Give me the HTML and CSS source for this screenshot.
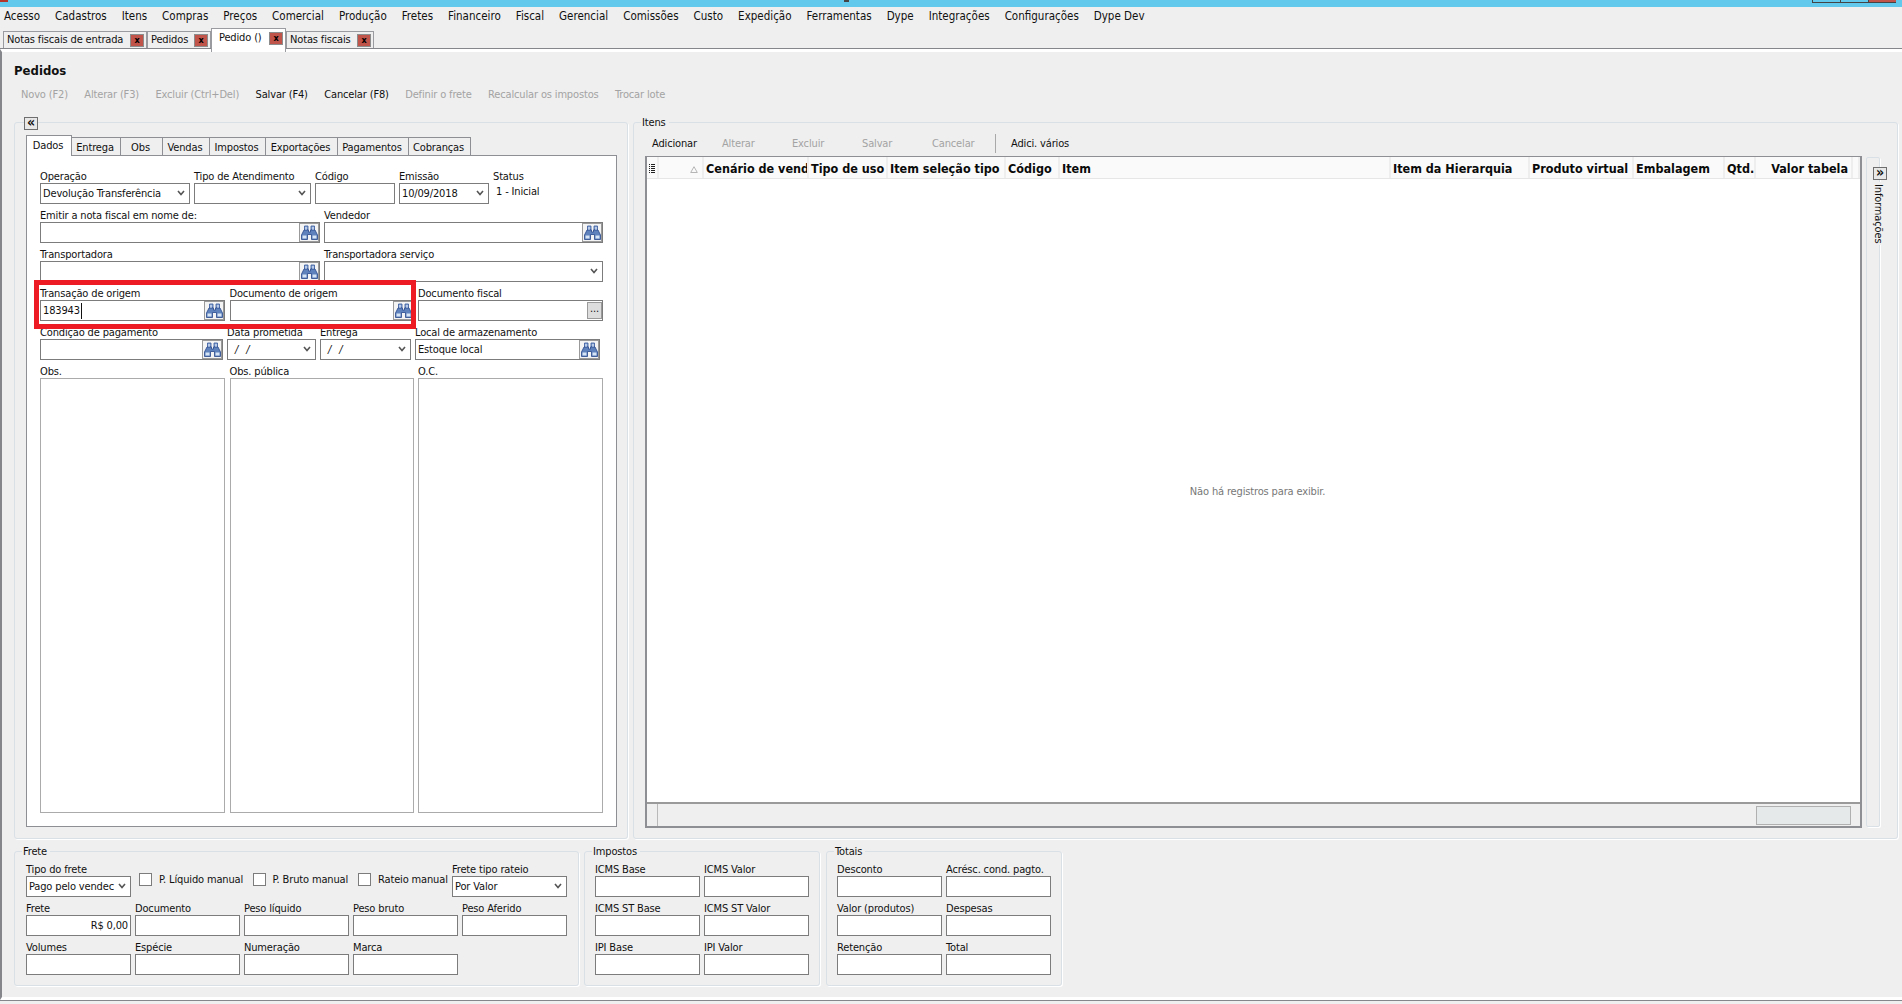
FILE: index.html
```html
<!DOCTYPE html>
<html lang="pt-BR">
<head>
  <meta charset="UTF-8">
  <title>Pedidos</title>
  <link rel="stylesheet" href="styles.css">
</head>
<body>
  <svg class="defs" width="0" height="0">
    <symbol id="binoc" viewBox="0 0 17 15">
      <path d="M3.500 1h3.500v4H3.500zM10 1h3.500v4H10z" fill="#8aa8d6" stroke="#35569a" stroke-width=".8"/>
      <path d="M3 5h4.500v2h2V5H14l2.500 5v4.500h-6v-5h-4v5h-6V10z" fill="#5f82bd" stroke="#27478a" stroke-width=".8"/>
      <path d="M1.500 10.500h4v3h-4zM11.500 10.500h4v3h-4z" fill="#d6e4f6"/>
      <path d="M4.500 2h1v3h-1zM11.500 2h1v3h-1z" fill="#e3edf9"/>
    </symbol>
    <symbol id="chev" viewBox="0 0 8 6">
      <path d="M1 1l3 3.500L7 1" fill="none" stroke="#555" stroke-width="1.600"/>
    </symbol>
  </svg>

  <div class="titlebar">
    <span class="app-icon"></span>
    <span class="title-mark"></span>
    <div class="win-btns">
      <span class="win-btn"></span>
      <span class="win-btn"></span>
      <span class="win-btn close"></span>
    </div>
  </div>

  <nav class="menu">
    <span>Acesso</span><span>Cadastros</span><span>Itens</span><span>Compras</span><span>Preços</span>
    <span>Comercial</span><span>Produção</span><span>Fretes</span><span>Financeiro</span><span>Fiscal</span>
    <span>Gerencial</span><span>Comissões</span><span>Custo</span><span>Expedição</span><span>Ferramentas</span>
    <span>Dype</span><span>Integrações</span><span>Configurações</span><span>Dype Dev</span>
  </nav>

  <div class="doc-tabs">
    <div class="doc-tab">Notas fiscais de entrada <b class="x">x</b></div>
    <div class="doc-tab">Pedidos <b class="x">x</b></div>
    <div class="doc-tab active">Pedido () <b class="x">x</b></div>
    <div class="doc-tab">Notas fiscais <b class="x">x</b></div>
  </div>

  <main class="page">
    <h1>Pedidos</h1>
    <div class="toolbar">
      <span class="off">Novo (F2)</span>
      <span class="off">Alterar (F3)</span>
      <span class="off">Excluir (Ctrl+Del)</span>
      <span>Salvar (F4)</span>
      <span>Cancelar (F8)</span>
      <span class="off">Definir o frete</span>
      <span class="off">Recalcular os impostos</span>
      <span class="off">Trocar lote</span>
    </div>

    <div class="work">
      <section class="group left-group">
        <span class="mini-btn collapse">«</span>
        <div class="tabs">
          <span class="tab active">Dados</span>
          <span class="tab">Entrega</span>
          <span class="tab">Obs</span>
          <span class="tab">Vendas</span>
          <span class="tab">Impostos</span>
          <span class="tab">Exportações</span>
          <span class="tab">Pagamentos</span>
          <span class="tab">Cobranças</span>
        </div>
        <div class="panel">
          <div class="row row-1">
            <div><label>Operação</label><div class="field select">Devolução Transferência<svg class="chev"><use href="#chev"/></svg></div></div>
            <div><label>Tipo de Atendimento</label><div class="field select"><svg class="chev"><use href="#chev"/></svg></div></div>
            <div><label>Código</label><div class="field"></div></div>
            <div><label>Emissão</label><div class="field select">10/09/2018<svg class="chev"><use href="#chev"/></svg></div></div>
            <div><label>Status</label><div class="status">1 - Inicial</div></div>
          </div>
          <div class="row row-2">
            <div><label>Emitir a nota fiscal em nome de:</label><div class="field"><span class="look"><svg><use href="#binoc"/></svg></span></div></div>
            <div><label>Vendedor</label><div class="field"><span class="look"><svg><use href="#binoc"/></svg></span></div></div>
          </div>
          <div class="row row-2">
            <div><label>Transportadora</label><div class="field"><span class="look"><svg><use href="#binoc"/></svg></span></div></div>
            <div><label>Transportadora serviço</label><div class="field select"><svg class="chev"><use href="#chev"/></svg></div></div>
          </div>
          <div class="row row-3">
            <div><label>Transação de origem</label><div class="field"><span class="caret">183943</span><span class="look"><svg><use href="#binoc"/></svg></span></div></div>
            <div><label>Documento de origem</label><div class="field"><span class="look"><svg><use href="#binoc"/></svg></span></div></div>
            <div><label>Documento fiscal</label><div class="field"><span class="dots">...</span></div></div>
          </div>
          <div class="row row-4">
            <div><label>Condição de pagamento</label><div class="field"><span class="look"><svg><use href="#binoc"/></svg></span></div></div>
            <div><label>Data prometida</label><div class="field select date">/ /<svg class="chev"><use href="#chev"/></svg></div></div>
            <div><label>Entrega</label><div class="field select date">/ /<svg class="chev"><use href="#chev"/></svg></div></div>
            <div><label>Local de armazenamento</label><div class="field">Estoque local<span class="look"><svg><use href="#binoc"/></svg></span></div></div>
          </div>
          <div class="row row-3">
            <div><label>Obs.</label><div class="memo"></div></div>
            <div><label>Obs. pública</label><div class="memo"></div></div>
            <div><label>O.C.</label><div class="memo"></div></div>
          </div>
          <div class="highlight"></div>
        </div>
      </section>

      <section class="group right-group">
        <span class="legend">Itens</span>
        <div class="item-bar">
          <span>Adicionar</span>
          <span class="off">Alterar</span>
          <span class="off">Excluir</span>
          <span class="off">Salvar</span>
          <span class="off last">Cancelar</span>
          <span class="sep"></span>
          <span>Adici. vários</span>
        </div>
        <div class="item-body">
          <div class="grid">
            <div class="grid-head">
              <span class="col-icon">
                <svg width="6" height="9" viewBox="0 0 6 9"><path d="M0 0h1v1H0zM2 0h4v1H2zM0 2h1v1H0zM2 2h4v1H2zM0 4h1v1H0zM2 4h4v1H2zM0 6h1v1H0zM2 6h4v1H2zM0 8h1v1H0zM2 8h4v1H2z" fill="#222"/></svg>
              </span>
              <span class="col-sort">
                <svg width="8" height="7" viewBox="0 0 8 7"><path d="M4 .7L7.300 6.500H.7z" fill="none" stroke="#b5b5b5"/></svg>
              </span>
              <span>Cenário de venda</span>
              <span>Tipo de uso</span>
              <span>Item seleção tipo</span>
              <span>Código</span>
              <span>Item</span>
              <span>Item da Hierarquia</span>
              <span>Produto virtual</span>
              <span>Embalagem</span>
              <span>Qtd.</span>
              <span class="right">Valor tabela</span>
              <span></span>
            </div>
            <div class="grid-empty">Não há registros para exibir.</div>
            <div class="grid-foot">
              <span class="foot-cell"></span>
              <span class="thumb"></span>
            </div>
          </div>
          <aside class="side">
            <span class="mini-btn expand">»</span>
            <span class="side-text">Informações</span>
          </aside>
        </div>
      </section>
    </div>

    <div class="bottom">
      <section class="group frete">
        <span class="legend">Frete</span>
        <div class="frete-top">
          <div class="col-a"><label>Tipo do frete</label><div class="field select">Pago pelo vendec<svg class="chev"><use href="#chev"/></svg></div></div>
          <div class="check"><i></i>P. Líquido manual</div>
          <div class="check"><i></i>P. Bruto manual</div>
          <div class="check"><i></i>Rateio manual</div>
          <div><label>Frete tipo rateio</label><div class="field select">Por Valor<svg class="chev"><use href="#chev"/></svg></div></div>
        </div>
        <div class="row row-5">
          <div><label>Frete</label><div class="field money">R$ 0,00</div></div>
          <div><label>Documento</label><div class="field"></div></div>
          <div><label>Peso líquido</label><div class="field"></div></div>
          <div><label>Peso bruto</label><div class="field"></div></div>
          <div><label>Peso Aferido</label><div class="field"></div></div>
        </div>
        <div class="row row-5">
          <div><label>Volumes</label><div class="field"></div></div>
          <div><label>Espécie</label><div class="field"></div></div>
          <div><label>Numeração</label><div class="field"></div></div>
          <div><label>Marca</label><div class="field"></div></div>
        </div>
      </section>

      <section class="group small">
        <span class="legend">Impostos</span>
        <div class="row row-5">
          <div><label>ICMS Base</label><div class="field"></div></div>
          <div><label>ICMS Valor</label><div class="field"></div></div>
        </div>
        <div class="row row-5">
          <div><label>ICMS ST Base</label><div class="field"></div></div>
          <div><label>ICMS ST Valor</label><div class="field"></div></div>
        </div>
        <div class="row row-5">
          <div><label>IPI Base</label><div class="field"></div></div>
          <div><label>IPI Valor</label><div class="field"></div></div>
        </div>
      </section>

      <section class="group small">
        <span class="legend">Totais</span>
        <div class="row row-5">
          <div><label>Desconto</label><div class="field"></div></div>
          <div><label>Acrésc. cond. pagto.</label><div class="field"></div></div>
        </div>
        <div class="row row-5">
          <div><label>Valor (produtos)</label><div class="field"></div></div>
          <div><label>Despesas</label><div class="field"></div></div>
        </div>
        <div class="row row-5">
          <div><label>Retenção</label><div class="field"></div></div>
          <div><label>Total</label><div class="field"></div></div>
        </div>
      </section>
    </div>
  </main>
</body>
</html>
```

FILE: styles.css
```css
* {
  box-sizing: border-box;
}
html, body {
  margin: 0;
  height: 1004px;
  overflow: hidden;
}
body {
  font-family: "DejaVu Sans Condensed", "Liberation Sans", sans-serif;
  font-size: 11px;
  letter-spacing: -0.15px;
  line-height: 16px;
  color: #111;
  background: #efefef;
}
.defs {
  position: absolute;
}

/* window chrome */
.titlebar {
  position: relative;
  display: flex;
  height: 7px;
  background: #63c9ec;
}
.app-icon {
  width: 8px;
  height: 2px;
  background: #b5352a;
}
.title-mark {
  position: absolute;
  left: 844px;
  top: 0;
  width: 5px;
  height: 2px;
  background: #444;
}
.win-btns {
  display: flex;
  margin-left: auto;
  margin-right: 6px;
}
.win-btn {
  width: 28px;
  height: 3px;
  border: 1px solid #444;
  border-top: 0;
  border-right: 0;
}
.win-btn.close {
  background: #c0544a;
}
.menu {
  display: flex;
  gap: 15px;
  height: 21px;
  padding-left: 4px;
  font-size: 11.500px;
  letter-spacing: 0;
  line-height: 19px;
}
.doc-tabs {
  display: grid;
  grid-template-columns: 144px 64px 75px 88px;
  height: 21px;
  padding-left: 3px;
  border-bottom: 1px solid #85868c;
}
.doc-tab {
  display: flex;
  justify-content: space-between;
  align-items: center;
  height: 17px;
  margin-top: 3px;
  padding: 0 2px 0 3px;
  background: #efefef;
  border: 1px solid #9a9ba0;
  border-bottom: 0;
}
.doc-tab.active {
  position: relative;
  height: 24px;
  margin-top: 0;
  padding: 0 2px 5px 7px;
  background: #fff;
}
.x {
  width: 14px;
  height: 13px;
  font-size: 9px;
  line-height: 11px;
  text-align: center;
  color: #000;
  background: #c0544a;
  border: 1px solid #8c8c8c;
}

/* page */
.page {
  height: 951px;
  padding: 11px 0 0 12px;
  border-left: 2px solid #85868c;
  border-top: 3px solid #fff;
  border-bottom: 3px solid #fff;
  box-shadow: 0 1px 0 #85868c;
}
h1 {
  margin: 0 0 7px;
  font-size: 13px;
  letter-spacing: 0;
  line-height: 16px;
  color: #111;
}
.toolbar {
  display: flex;
  gap: 16.400px;
  padding-left: 7px;
  margin-bottom: 20px;
  line-height: 18px;
  height: 16px;
}
.off {
  color: #a3a3a3;
}
.work {
  display: flex;
  gap: 5px;
  margin-bottom: 12px;
}
.group {
  position: relative;
  border: 1px solid #d9e0e6;
  border-radius: 3px;
  box-shadow: 1px 1px 0 #fff;
}
.legend {
  position: absolute;
  top: -8px;
  left: 7px;
  padding: 0 3px 0 1px;
  background: #efefef;
}
.mini-btn {
  position: absolute;
  width: 14px;
  height: 13px;
  font-size: 14px;
  font-weight: bold;
  line-height: 9px;
  text-align: center;
  color: #111;
  background: #e8e8e8;
  border: 1px solid #6e6e6e;
}
.collapse {
  left: 9px;
  top: -6px;
}

/* pedido form */
.left-group {
  width: 614px;
  height: 717px;
  padding: 12px 0 0 11px;
}
.tabs {
  display: grid;
  grid-template-columns: 45px 49px 42px 47px 56px 72px 71px 62px;
  width: 444px;
  height: 21px;
  margin: 0 0 -1px 1px;
}
.tab {
  position: relative;
  height: 18px;
  margin-top: 2px;
  margin-left: -1px;
  padding-right: 2px;
  line-height: 19px;
  text-align: center;
  background: #efefef;
  border: 1px solid #8e8f94;
  border-bottom: 0;
}
.tab.active {
  z-index: 1;
  height: 21px;
  margin-top: 0;
  line-height: 20px;
  background: #fff;
}
.panel {
  position: relative;
  width: 591px;
  height: 672px;
  padding: 11px 0 0 13px;
  background: #fff;
  border: 1px solid #8e8f94;
}
.row {
  display: grid;
  column-gap: 4px;
  margin-bottom: 2px;
}
.row-1 { grid-template-columns: 150px 117px 80px 90px 70px; }
.row-2 { grid-template-columns: 280px 279px; }
.row-3 { grid-template-columns: 185px 184px 185px; column-gap: 4.500px; }
.row-4 { grid-template-columns: 183px 89px 91px 185px; }
.row-5 { grid-template-columns: repeat(5, 105px); }
label {
  display: block;
  height: 16px;
  line-height: 20px;
  white-space: nowrap;
}
.field {
  position: relative;
  display: flex;
  align-items: center;
  height: 21px;
  padding-left: 2px;
  white-space: nowrap;
  overflow: hidden;
  background: #fff;
  border: 1px solid #7c7c7c;
}
.select {
  padding-right: 16px;
}
.date {
  padding-left: 7px;
  font-style: italic;
  word-spacing: 5px;
}
.chev {
  position: absolute;
  right: 4px;
  top: 6px;
  width: 8px;
  height: 6px;
}
.look {
  position: absolute;
  top: 0;
  right: 0;
  width: 20px;
  height: 19px;
  padding: 1px;
  background: #f4f4f4;
  border: 1px solid #9a9a9a;
}
.look svg {
  display: block;
  width: 17px;
  height: 15px;
}
.dots {
  position: absolute;
  top: 1px;
  right: 0;
  width: 15px;
  height: 17px;
  line-height: 12px;
  text-align: center;
  background: #ddd;
  border: 1px solid #9a9a9a;
}
.caret {
  padding-right: 1px;
  border-right: 1px solid #111;
}
.status {
  height: 21px;
  padding: 1px 0 0 3px;
}
.memo {
  height: 435px;
  background: #fff;
  border: 1px solid #ababab;
}
.highlight {
  position: absolute;
  left: 7px;
  top: 124px;
  width: 382px;
  height: 49px;
  border: 5px solid #ed1c24;
}

/* itens */
.right-group {
  width: 1265px;
  height: 717px;
  padding-left: 11px;
}
.item-bar {
  display: flex;
  align-items: center;
  height: 33px;
  padding: 12px 0 4px 7px;
}
.item-bar span {
  width: 70px;
}
.item-bar .last {
  width: 63px;
}
.item-bar .sep {
  width: 1px;
  height: 19px;
  margin-right: 15px;
  background: #a9a9a9;
}
.item-body {
  display: flex;
  gap: 4px;
  height: 672px;
}
.grid {
  display: flex;
  flex-direction: column;
  width: 1217px;
  background: #fff;
  border: 2px solid #8e8f94;
  border-top-width: 1px;
}
.grid-head {
  display: grid;
  grid-template-columns: 12px 45px 105px 79px 118px 54px 331px 139px 104px 91px 31px 97px 1fr;
  height: 22px;
  background: #fafafa;
  border-bottom: 1px solid #e6e6e6;
}
.grid-head span {
  padding-left: 2px;
  font-size: 12.500px;
  font-weight: bold;
  letter-spacing: 0;
  line-height: 23px;
  white-space: nowrap;
  overflow: hidden;
  color: #0a0a0a;
  border-right: 2px solid #eee;
}
.grid-head .col-sort {
  padding: 0 4px 0 0;
  text-align: right;
}
.grid-head .right {
  padding-right: 3px;
  text-align: right;
}
.grid-empty {
  display: flex;
  flex: 1;
  justify-content: center;
  align-items: center;
  padding: 2px 0 0 8px;
  color: #777;
}
.grid-foot {
  display: flex;
  justify-content: space-between;
  align-items: center;
  height: 24px;
  padding-right: 9px;
  background: #efefef;
  border-top: 2px solid #9a9a9a;
}
.foot-cell {
  width: 11px;
  height: 100%;
  border-right: 1px solid #b9b9b9;
}
.thumb {
  width: 95px;
  height: 19px;
  background: #e6e9ea;
  border: 1px solid #b0b0b0;
}
.side {
  position: relative;
  width: 14px;
  height: 670px;
  margin-top: 1px;
  border: 1px solid #d9e0e6;
  border-radius: 2px;
  box-shadow: 1px 1px 0 #fff;
}
.expand {
  left: 6px;
  top: 9px;
}
.side-text {
  position: absolute;
  left: 4px;
  top: 24px;
  padding: 2px 0;
  writing-mode: vertical-rl;
  line-height: 15px;
  background: #efefef;
}

/* rodape */
.bottom {
  display: flex;
  gap: 5px;
}
.frete {
  width: 565px;
  height: 135px;
  padding: 8px 0 0 11px;
}
.small {
  width: 236px;
  height: 135px;
  padding: 8px 0 0 10px;
}
.small:last-child {
  margin-left: 1px;
}
.small .row-5 {
  grid-template-columns: 105px 105px;
}
.frete-top {
  display: grid;
  grid-template-columns: 113px 113.500px 105.500px 94px 115px;
  margin-bottom: 2px;
}
.col-a {
  width: 105px;
}
.check {
  display: flex;
  align-items: center;
  gap: 7px;
  height: 13px;
  margin-top: 13px;
  white-space: nowrap;
}
.check i {
  flex: none;
  width: 13px;
  height: 13px;
  background: #fff;
  border: 1px solid #7c7c7c;
}
.money {
  justify-content: flex-end;
  padding-right: 2px;
}
```
